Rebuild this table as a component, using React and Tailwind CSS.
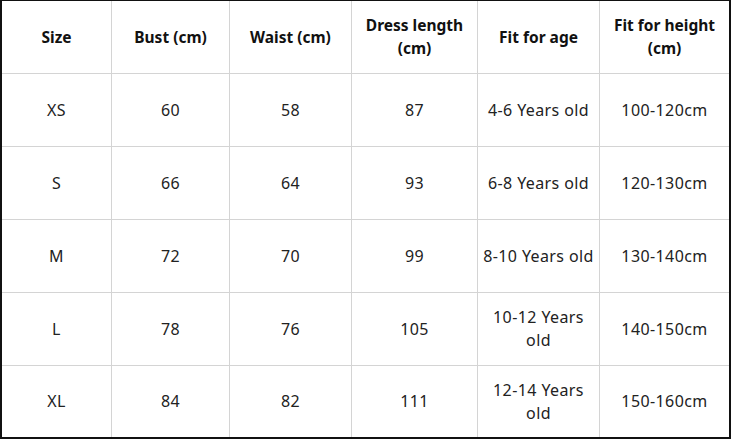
import React from "react";

const headers = ["Size", "Bust (cm)", "Waist (cm)", "Dress length (cm)", "Fit for age", "Fit for height (cm)"];

const rows = [
  ["XS", "60", "58", "87", "4-6 Years old", "100-120cm"],
  ["S", "66", "64", "93", "6-8 Years old", "120-130cm"],
  ["M", "72", "70", "99", "8-10 Years old", "130-140cm"],
  ["L", "78", "76", "105", "10-12 Years old", "140-150cm"],
  ["XL", "84", "82", "111", "12-14 Years old", "150-160cm"],
];

const Cell = ({ children, bold, last, bottom }) => (
  <div
    className={
      "flex items-center justify-center text-center leading-[23px] " +
      (bold ? "px-2 font-bold text-[15.5px] text-[#111] " : "px-[3px] text-[16px] tracking-[0.4px] text-[#222] ") +
      (last ? "" : "border-r border-[#d4d4d4] ") +
      (bottom ? "" : "border-b border-[#d4d4d4]")
    }
  >
    {children}
  </div>
);

const App = () => {
  return (
    <div className="w-[731px] h-[439px] bg-white" style={{ fontFamily: '"Noto Sans", "Noto Sans CJK KR", sans-serif' }}>
      <div className="w-full h-full border-t border-l-2 border-r-2 border-b-2 border-[#111] grid grid-cols-[110px_118px_122px_126px_122px_1fr] grid-rows-[73px_73px_73px_73px_73px_1fr]">
        {headers.map((h, i) => (
          <Cell key={h} bold last={i === 5}>
            {h}
          </Cell>
        ))}
        {rows.map((r, ri) =>
          r.map((c, ci) => (
            <Cell key={ri + "-" + ci} last={ci === 5} bottom={ri === rows.length - 1}>
              {c}
            </Cell>
          ))
        )}
      </div>
    </div>
  );
};

export default App;
